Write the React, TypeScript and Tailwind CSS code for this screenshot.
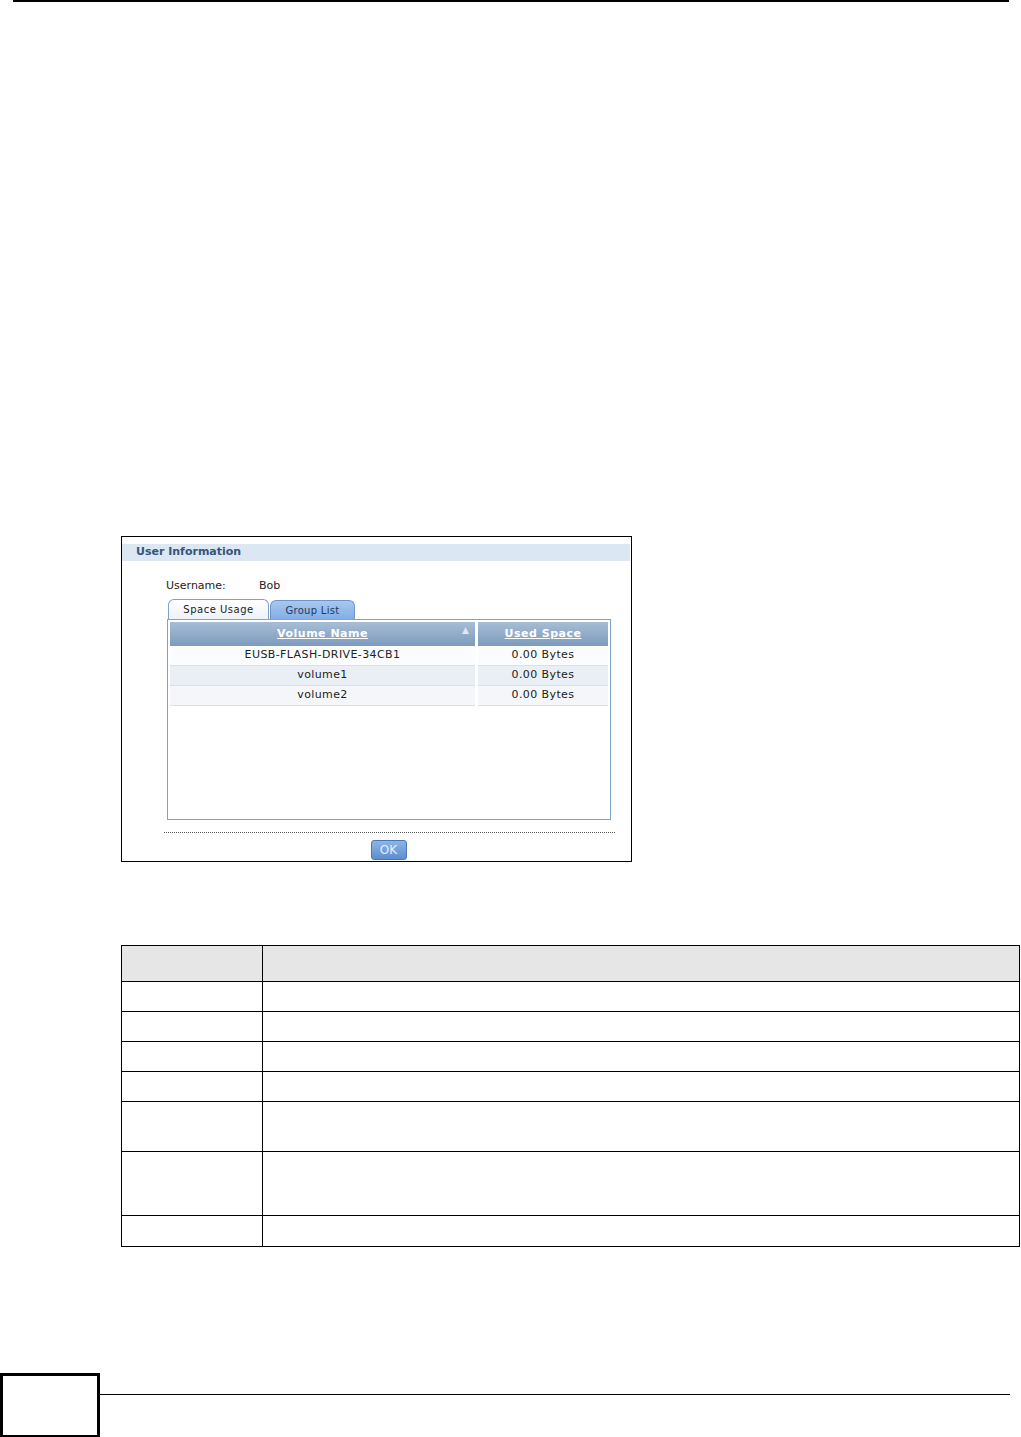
import React from "react";

const rows = [
  { name: "EUSB-FLASH-DRIVE-34CB1", used: "0.00 Bytes", bg: "bg-[#fbfcfd]" },
  { name: "volume1", used: "0.00 Bytes", bg: "bg-[#eaeff5]" },
  { name: "volume2", used: "0.00 Bytes", bg: "bg-[#f4f6f9]" },
];

const docRows = ["h-[30px]", "h-[30px]", "h-[30px]", "h-[30px]", "h-[50px]", "h-[64px]", "h-[30px]"];

function UserInfoDialog() {
  return (
    <div className="ml-[121px] mt-[534px] w-[511px] h-[326px] border border-black bg-white flex flex-col font-['DejaVu_Sans',sans-serif] text-[11px] text-[#222]">
      {/* Title bar */}
      <div className="mt-[7px] mr-[1px] h-[17px] bg-[#dbe7f3] flex items-center pl-[14px]">
        <span className="font-bold text-[#36557a] text-[11px]">User Information</span>
      </div>

      {/* Username */}
      <div className="mt-[18px] pl-[44px] flex h-[14px] items-center">
        <span className="w-[93px]">Username:</span>
        <span>Bob</span>
      </div>

      {/* Tabs */}
      <div className="mt-[6px] pl-[46px] flex items-end h-[20px]">
        <div className="w-[101px] h-[20px] rounded-t-[6px] border border-b-0 border-[#7fa2c9] bg-gradient-to-b from-white to-[#eef3fa] flex items-center justify-center text-[10px] tracking-[0.5px]">
          Space Usage
        </div>
        <div className="ml-[1px] w-[85px] h-[19px] rounded-t-[6px] border border-b-0 border-[#6d95c8] bg-gradient-to-b from-[#a9c7ee] to-[#82aee6] flex items-center justify-center text-[10px] tracking-[0.3px] text-[#1f3a5c]">
          Group List
        </div>
      </div>

      {/* Table box */}
      <div className="ml-[45px] w-[444px] h-[201px] border border-[#7fa2c9] bg-white px-[2px] pt-[2px] flex flex-col">
        <div className="flex gap-[3px] h-[24px]">
          <div className="relative w-[305px] h-full bg-gradient-to-b from-[#a7bdd5] to-[#7d9bbd] flex items-center justify-center">
            <span className="font-bold text-white underline text-[11px] tracking-[0.5px]">Volume Name</span>
            <span className="absolute right-[6px] top-[2px] text-[9px] text-[#dfe8f2]">▲</span>
          </div>
          <div className="w-[130px] h-full bg-gradient-to-b from-[#a7bdd5] to-[#7d9bbd] flex items-center justify-center">
            <span className="font-bold text-white underline text-[11px] tracking-[0.5px]">Used Space</span>
          </div>
        </div>
        {rows.map((r) => (
          <div key={r.name} className="flex gap-[3px] h-[20px]">
            <div className={`w-[305px] h-full ${r.bg} border-b border-[#d9e0e8] flex items-center justify-center tracking-[0.4px]`}>
              {r.name}
            </div>
            <div className={`w-[130px] h-full ${r.bg} border-b border-[#d9e0e8] flex items-center justify-center tracking-[0.4px]`}>
              {r.used}
            </div>
          </div>
        ))}
      </div>

      {/* Separator */}
      <div className="ml-[42px] mt-[12px] w-[451px] border-t border-dotted border-[#555]" />

      {/* OK button */}
      <div className="mt-[7px] flex justify-center">
        <button className="ml-[24px] w-[36px] h-[20px] rounded-[3px] border border-[#4a78b5] bg-gradient-to-b from-[#8eb4e3] to-[#5d8ecf] text-[#e4eefa] text-[12px] leading-none flex items-center justify-center">
          OK
        </button>
      </div>
    </div>
  );
}

function DocTable() {
  return (
    <div className="ml-[121px] mt-[83px] w-[899px] border border-black">
      <div className="flex h-[36px] bg-[#e6e6e6] border-b border-black">
        <div className="w-[141px] border-r border-black" />
        <div className="flex-1" />
      </div>
      {docRows.map((h, i) => (
        <div key={i} className={`flex ${h} ${i < docRows.length - 1 ? "border-b border-black" : ""}`}>
          <div className="w-[141px] border-r border-black" />
          <div className="flex-1" />
        </div>
      ))}
    </div>
  );
}

export default function App() {
  return (
    <div className="w-[1021px] h-[1437px] bg-white relative overflow-hidden">
      <div className="ml-[13px] w-[996px] h-[2px] bg-black" />
      <UserInfoDialog />
      <DocTable />
      <div className="mt-[126px] flex items-start">
        <div className="w-[100px] h-[65px] border-[3px] border-black" />
        <div className="mt-[21px] w-[910px] h-[1px] bg-black" />
      </div>
    </div>
  );
}
